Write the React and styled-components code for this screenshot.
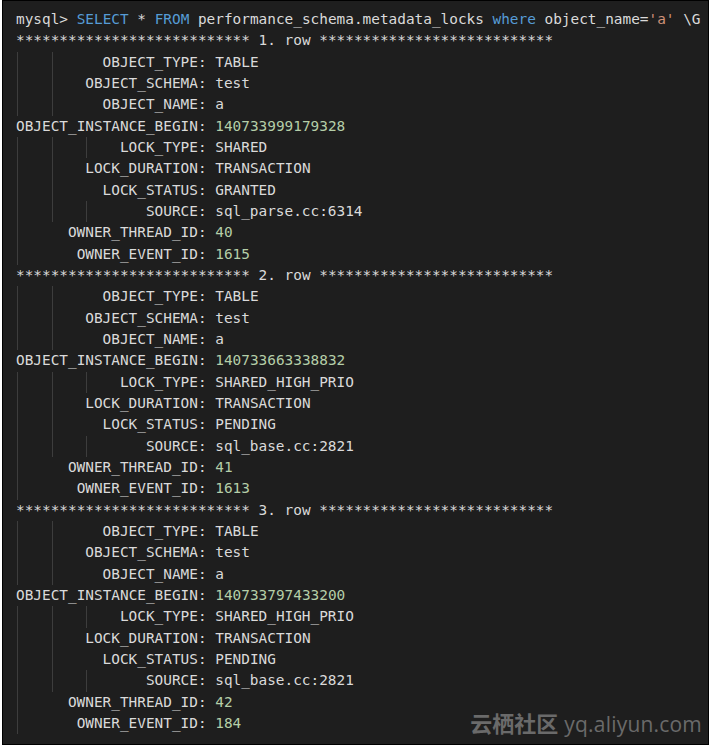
import React from 'react';
import styled, { createGlobalStyle } from 'styled-components';

const Global = createGlobalStyle`
    html, body {
        margin: 0;
        padding: 0;
        background: #fff;
    }
`;

const Terminal = styled.div`
    position: relative;
    box-sizing: border-box;
    width: 707px;
    height: 745px;
    margin-left: 2px;
    padding: 8px 0 0 13px;
    background: #1e1e1e;
    border: 1px solid #000;
    font-family: "DejaVu Sans Mono", "Liberation Mono", monospace;
    font-size: 14.4px;
    color: #dadada;
    overflow: hidden;
`;

const Line = styled.div`
    display: flex;
    height: 21.33px;
    line-height: 21.33px;
    white-space: pre;
`;

// one indent step of 4 columns with its faint guide
const Guide = styled.span`
    width: ${p => p.$cols}ch;
    background: ${p => p.$line ? 'linear-gradient(#3d3d3d, #3d3d3d) 1px 0 / 1px 100% no-repeat' : 'none'};
`;

const Tok = styled.span`
    color: ${p => p.$c || '#dadada'};
`;

const Watermark = styled.div`
    position: absolute;
    right: 6px;
    bottom: 6px;
    display: flex;
    align-items: baseline;
    gap: 6px;
    color: #6a6a6a;
    white-space: nowrap;

    & .cn {
        font-family: "Noto Sans CJK SC", sans-serif;
        font-weight: 700;
        font-size: 22px;
    }

    & .en {
        font-family: "Open Sans", "Liberation Sans", sans-serif;
        font-size: 21px;
        letter-spacing: 0.2px;
    }
`;

const BLUE = '#569cd6';
const GREEN = '#b5cea8';
const ORANGE = '#ce9178';

const rows = [
    {
        no: 1,
        f: [
            ['OBJECT_TYPE', 'TABLE'],
            ['OBJECT_SCHEMA', 'test'],
            ['OBJECT_NAME', 'a'],
            ['OBJECT_INSTANCE_BEGIN', '140733999179328', true],
            ['LOCK_TYPE', 'SHARED'],
            ['LOCK_DURATION', 'TRANSACTION'],
            ['LOCK_STATUS', 'GRANTED'],
            ['SOURCE', 'sql_parse.cc:6314'],
            ['OWNER_THREAD_ID', '40', true],
            ['OWNER_EVENT_ID', '1615', true],
        ],
    },
    {
        no: 2,
        f: [
            ['OBJECT_TYPE', 'TABLE'],
            ['OBJECT_SCHEMA', 'test'],
            ['OBJECT_NAME', 'a'],
            ['OBJECT_INSTANCE_BEGIN', '140733663338832', true],
            ['LOCK_TYPE', 'SHARED_HIGH_PRIO'],
            ['LOCK_DURATION', 'TRANSACTION'],
            ['LOCK_STATUS', 'PENDING'],
            ['SOURCE', 'sql_base.cc:2821'],
            ['OWNER_THREAD_ID', '41', true],
            ['OWNER_EVENT_ID', '1613', true],
        ],
    },
    {
        no: 3,
        f: [
            ['OBJECT_TYPE', 'TABLE'],
            ['OBJECT_SCHEMA', 'test'],
            ['OBJECT_NAME', 'a'],
            ['OBJECT_INSTANCE_BEGIN', '140733797433200', true],
            ['LOCK_TYPE', 'SHARED_HIGH_PRIO'],
            ['LOCK_DURATION', 'TRANSACTION'],
            ['LOCK_STATUS', 'PENDING'],
            ['SOURCE', 'sql_base.cc:2821'],
            ['OWNER_THREAD_ID', '42', true],
            ['OWNER_EVENT_ID', '184', true],
        ],
    },
];

const STARS = '*'.repeat(27);

function Indent({ n }) {
    const parts = [];
    let left = n;
    while (left > 0) {
        const w = Math.min(4, left);
        parts.push(<Guide key={parts.length} $cols={w} $line={w === 4} />);
        left -= w;
    }
    return parts;
}

function Field({ name, value, num }) {
    const pad = 21 - name.length;
    return (
        <Line>
            <Indent n={pad} />
            <Tok>{name}: </Tok>
            <Tok $c={num ? GREEN : null}>{value}</Tok>
        </Line>
    );
}

export default function App() {
    return (
        <>
            <Global />
            <Terminal>
                <Line>
                    <Tok>mysql&gt; </Tok>
                    <Tok $c={BLUE}>SELECT</Tok>
                    <Tok> * </Tok>
                    <Tok $c={BLUE}>FROM</Tok>
                    <Tok> performance_schema.metadata_locks </Tok>
                    <Tok $c={BLUE}>where</Tok>
                    <Tok> object_name=</Tok>
                    <Tok $c={ORANGE}>'a'</Tok>
                    <Tok> \G</Tok>
                </Line>
                {rows.map(r => (
                    <React.Fragment key={r.no}>
                        <Line>
                            <Tok>{STARS} {r.no}. row {STARS}</Tok>
                        </Line>
                        {r.f.map(([name, value, num]) => (
                            <Field key={name} name={name} value={value} num={num} />
                        ))}
                    </React.Fragment>
                ))}
                <Watermark>
                    <span className="cn">云栖社区</span>
                    <span className="en">yq.aliyun.com</span>
                </Watermark>
            </Terminal>
        </>
    );
}
